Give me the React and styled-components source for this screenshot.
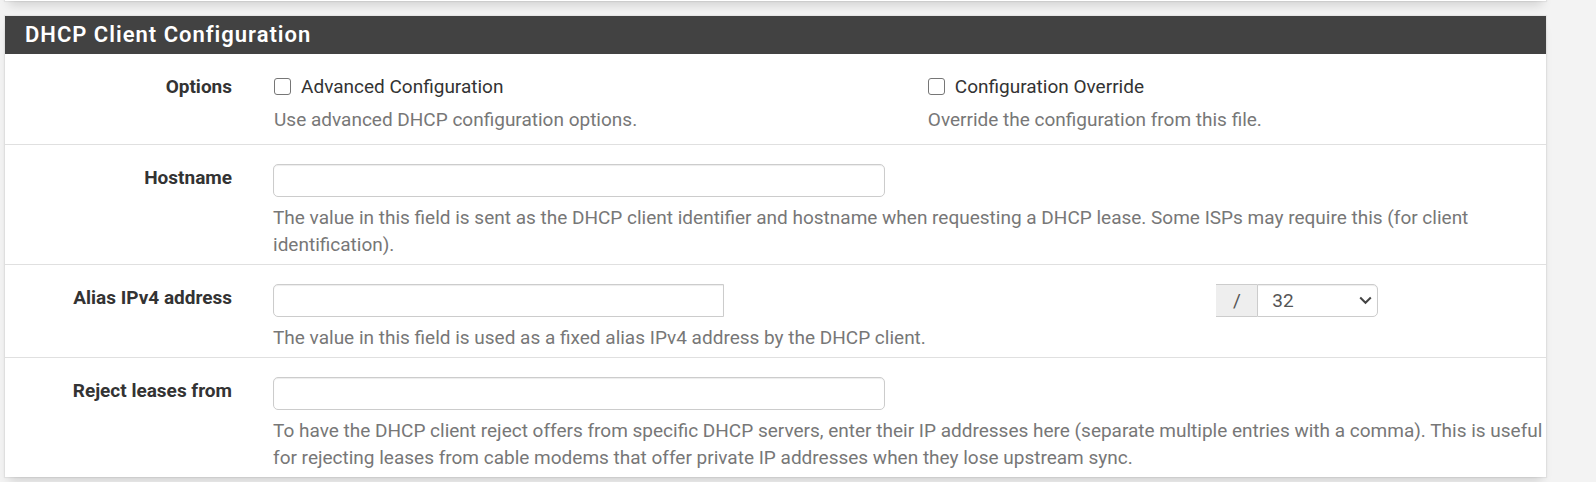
import React from "react";
import styled, { createGlobalStyle } from "styled-components";

const GlobalStyle = createGlobalStyle`
  *, *::before, *::after { box-sizing: border-box; }
  body {
    margin: 0;
    background: #f3f3f3;
    color: #333;
    font-family: Roboto, "Liberation Sans", sans-serif;
    font-size: 19px;
    line-height: 27px;
  }
  input, select { font: inherit; }
`;

const Page = styled.main`
  padding: 0 50px 20px 5px;
`;

const shadow = "0 8px 10px -4px rgba(0, 0, 0, 0.14), 0 0 1px 1px rgba(0, 0, 0, 0.05)";

const PreviousPanel = styled.div`
  height: 41px;
  margin: -40px 0 15px;
  background: #fff;
  box-shadow: ${shadow};
`;

const Panel = styled.form`
  background: #fff;
  box-shadow: ${shadow};
`;

const PanelTitle = styled.h2`
  margin: 0;
  padding: 5px 20px 6px;
  background: #424242;
  color: #fff;
  font-size: 22px;
  line-height: 27px;
  font-weight: 600;
  letter-spacing: 1px;
`;

const Row = styled.div`
  display: grid;
  grid-template-columns: 16.55% minmax(0, 1fr);
  padding: 19px 0 6px;
  & + & { border-top: 1px solid #e0e0e0; }
`;

const RowLabel = styled.label`
  padding-right: 28px;
  text-align: right;
  font-weight: 700;
`;

const Content = styled.div`
  padding-left: 13px;
`;

const Help = styled.p`
  margin: ${(p) => (p.$tight ? "6px" : "7px")} 0 0;
  color: #777;
`;

const Options = styled.div`
  display: grid;
  grid-template-columns: 51.4% minmax(0, 1fr);
  padding: 0 0 5px 1px;
`;

const CheckLabel = styled.label`
  display: flex;
  align-items: center;
  gap: 10px;
`;

const Checkbox = styled.input`
  appearance: none;
  width: 17px;
  height: 17px;
  margin: 0;
  border: 1px solid #767676;
  border-radius: 3px;
  background: #fff;
  &:checked { background: #1976d2; }
`;

const TextInput = styled.input`
  display: block;
  width: ${(p) => p.$width};
  height: 33px;
  padding: 4px 12px;
  border: 1px solid #ccc;
  border-radius: ${(p) => (p.$squareEnd ? "5px 0 0 5px" : "5px")};
  background: #fff;
  box-shadow: inset 0 1px 1px rgba(0, 0, 0, 0.075);
  color: #555;
`;

const AddressLine = styled.div`
  display: grid;
  grid-template-columns: 74.1% auto;
  justify-content: start;
`;

const MaskGroup = styled.div`
  display: flex;
`;

const Slash = styled.span`
  width: 41px;
  height: 33px;
  border: solid #ccc;
  border-width: 1px 0;
  background: #eee;
  color: #555;
  line-height: 31px;
  text-align: center;
`;

const SelectWrap = styled.div`
  position: relative;
  width: 121px;
`;

const Select = styled.select`
  appearance: none;
  display: block;
  width: 100%;
  height: 33px;
  padding: 0 30px 0 14px;
  border: 1px solid #ccc;
  border-radius: 0 5px 5px 0;
  background: #fff;
  box-shadow: inset 0 1px 1px rgba(0, 0, 0, 0.075);
  color: #555;
`;

const Chevron = styled.svg`
  position: absolute;
  top: 12px;
  right: 6px;
  pointer-events: none;
`;

const prefixes = Array.from({ length: 32 }, (_, i) => 32 - i);

function Option({ id, label, help }) {
  return (
    <div>
      <CheckLabel htmlFor={id}>
        <Checkbox type="checkbox" id={id} />
        {label}
      </CheckLabel>
      <Help $tight>{help}</Help>
    </div>
  );
}

export default function App() {
  return (
    <>
      <GlobalStyle />
      <Page>
        <PreviousPanel />
        <Panel>
          <PanelTitle>DHCP Client Configuration</PanelTitle>
          <Row role="group" aria-labelledby="options-label">
            <RowLabel as="span" id="options-label">Options</RowLabel>
            <Content>
              <Options>
                <Option
                  id="advanced"
                  label="Advanced Configuration"
                  help="Use advanced DHCP configuration options."
                />
                <Option
                  id="override"
                  label="Configuration Override"
                  help="Override the configuration from this file."
                />
              </Options>
            </Content>
          </Row>
          <Row>
            <RowLabel htmlFor="hostname">Hostname</RowLabel>
            <Content>
              <TextInput id="hostname" type="text" $width="48.1%" />
              <Help>
                The value in this field is sent as the DHCP client identifier and hostname when
                requesting a DHCP lease. Some ISPs may require this (for client identification).
              </Help>
            </Content>
          </Row>
          <Row>
            <RowLabel htmlFor="alias">Alias IPv4 address</RowLabel>
            <Content>
              <AddressLine>
                <TextInput id="alias" type="text" $width="47.8%" $squareEnd />
                <MaskGroup>
                  <Slash>/</Slash>
                  <SelectWrap>
                    <Select aria-label="Alias subnet mask" defaultValue="32">
                      {prefixes.map((n) => (
                        <option key={n} value={n}>{n}</option>
                      ))}
                    </Select>
                    <Chevron width="13" height="9" viewBox="0 0 13 9" aria-hidden="true">
                      <path d="M1.2 1.5 6.5 6.8 11.8 1.5" fill="none" stroke="#444" strokeWidth="2" />
                    </Chevron>
                  </SelectWrap>
                </MaskGroup>
              </AddressLine>
              <Help>
                The value in this field is used as a fixed alias IPv4 address by the DHCP client.
              </Help>
            </Content>
          </Row>
          <Row>
            <RowLabel htmlFor="reject">Reject leases from</RowLabel>
            <Content>
              <TextInput id="reject" type="text" $width="48.1%" />
              <Help>
                To have the DHCP client reject offers from specific DHCP servers, enter their IP
                addresses here (separate multiple entries with a comma). This is useful for
                rejecting leases from cable modems that offer private IP addresses when they lose
                upstream sync.
              </Help>
            </Content>
          </Row>
        </Panel>
      </Page>
    </>
  );
}
